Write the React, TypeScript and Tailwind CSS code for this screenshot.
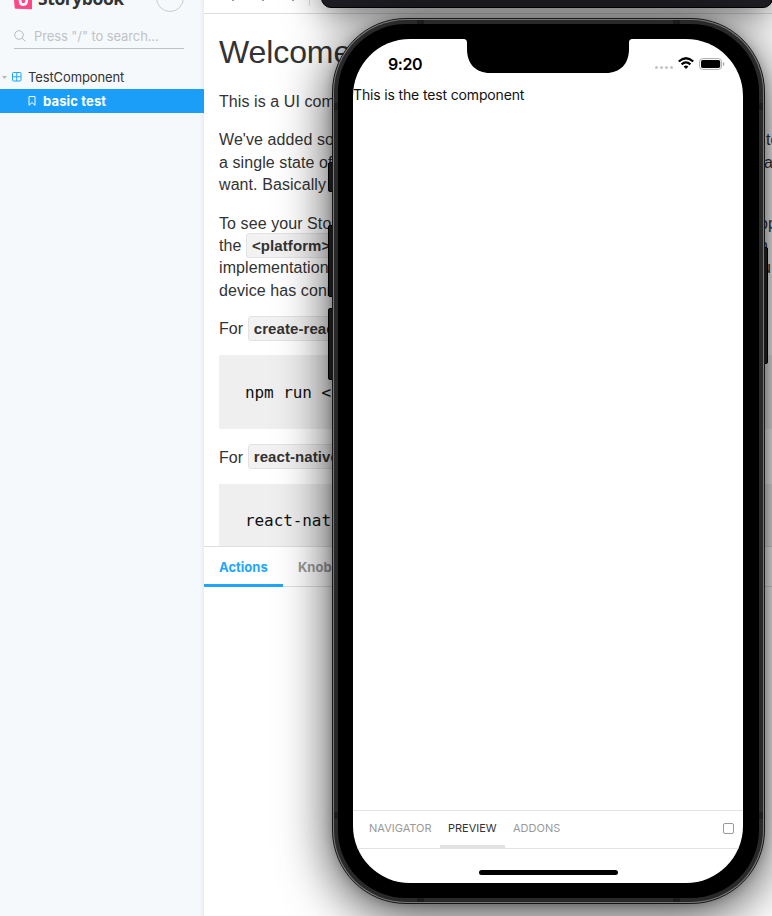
import { ReactNode } from "react";

function Line({ children, tail, shift = "" }: { children: ReactNode; tail?: string; shift?: string }) {
  return (
    <div className="flex h-[22.4px] justify-between whitespace-nowrap">
      <span>{children}</span>
      {tail && <span className={`w-2 shrink-0 ${shift}`}>{tail}</span>}
    </div>
  );
}

function Code({ children }: { children: ReactNode }) {
  return (
    <code className="-mt-[3px] inline-block h-[25px] rounded-[3px] border border-[#e3e3e3] bg-[#f2f2f2] px-[5px] align-middle font-['Liberation_Sans',sans-serif] text-[15px] leading-[23px] font-bold">
      {children}
    </code>
  );
}

function Sidebar() {
  return (
    <aside className="flex w-[204px] shrink-0 flex-col bg-[#f6f9fc] font-[Inter,sans-serif] shadow-[inset_-4px_0_4px_-3px_#dfe5ea]">
      <div className="flex h-[12px] items-end justify-between pr-5 pl-[14px]">
        <div className="flex h-[12px] items-end">
          <svg width="18" height="12" viewBox="0 0 18 12" className="shrink-0">
            <path d="M0 0h18v9.3L1.8 8.7Q.8 8.6.7 7.7Z" fill="#ff4785" />
            <path d="M6.1 0v.9q0 3.8 3.2 3.8T12.7.8V0" fill="none" stroke="white" strokeWidth="2.7" />
          </svg>
          <b className="mb-px ml-[6px] font-['Open_Sans',sans-serif] text-[17.5px] leading-[26px] font-bold tracking-[-0.42px] text-[#333]">
            Storybook
          </b>
        </div>
        <div className="size-7 shrink-0 rounded-full border border-[#c9ccce]" />
      </div>
      <div className="mx-5 ml-[14px] mt-[12px] flex h-[25px] items-center gap-[8px] border-b border-[#bfc2c4] text-[13px] text-[#bfc2c4]">
        <svg width="12" height="12" viewBox="0 0 12 12" fill="none" stroke="#b9bcbe" strokeWidth="1">
          <circle cx="5" cy="5" r="4.3" />
          <path d="m8.2 8.2 3.2 3.2" />
        </svg>
        <span className="pt-[2px] tracking-[-0.1px]">Press "/" to search...</span>
      </div>
      <div className="mt-[17px] flex h-[23px] items-center text-[13px] text-[#333]">
        <svg width="7" height="4" viewBox="0 0 7 4" className="ml-[1px] shrink-0">
          <path d="M1 0h5L3.5 3Z" fill="#b5b8ba" />
        </svg>
        <svg width="10" height="10" viewBox="0 0 10 10" fill="none" stroke="#1ea7fd" className="-mt-px ml-1 shrink-0">
          <rect x=".5" y=".5" width="8.5" height="8.5" rx="1" />
          <path d="M4.75 1v8M1 4.75h8" />
        </svg>
        <span className="ml-[6px] tracking-[-0.12px]">TestComponent</span>
      </div>
      <div className="flex h-6 items-center bg-[#1a9ef7] pl-7 text-[13px] font-bold text-white">
        <svg width="8" height="10" viewBox="0 0 8 10" fill="none" stroke="white">
          <path d="M1 .5h6v8.8L4 6.5 1 9.3Z" />
        </svg>
        <span className="ml-[7px] pt-px tracking-[0.14px]">basic test</span>
      </div>
    </aside>
  );
}

function Docs() {
  return (
    <div className="flex h-[546px] flex-col overflow-hidden">
      <div className="flex h-[14px] shrink-0 items-start border-b border-[#dedede] pl-7">
        <i className="h-px w-[2px] bg-[#999]" />
        <i className="ml-7 h-px w-[2px] bg-[#999]" />
        <i className="ml-7 h-px w-[2px] bg-[#999]" />
        <i className="ml-[15px] h-[6px] w-px bg-[#ddd]" />
      </div>
      <div className="flex flex-col pl-[15px] text-[16px] leading-[22.4px] tracking-[0.08px] text-[#333]">
        <h1 className="mt-[18px] h-[40px] text-[32px] leading-[40px] tracking-[-0.1px]">Welcome</h1>
        <div className="mt-[19px]"><Line>This is a UI com</Line></div>
        <div className="mt-4">
          <Line tail="to" shift="translate-x-[2px]">We've added so</Line>
          <Line tail="a">a single state of</Line>
          <Line>want. Basically</Line>
        </div>
        <div className="mt-4">
          <Line tail="op" shift="-translate-x-[5px]">To see your Sto</Line>
          <Line tail="n" shift="-translate-x-[5px]">the <Code>&lt;platform&gt;</Code></Line>
          <Line tail="u" shift="-translate-x-[2px]">implementation</Line>
          <Line>device has conn</Line>
        </div>
        <div className="mt-4"><Line>For <Code>create-react</Code></Line></div>
        <pre className="mt-[14px] h-[74px] bg-[#efefef] pt-[27px] pl-[26px] font-['DejaVu_Sans_Mono',monospace] text-[16px] tracking-[-0.08px] text-[#111]">npm run &lt;</pre>
        <div className="mt-[18px]"><Line>For <Code>react-native</Code></Line></div>
        <pre className="mt-[15px] h-[74px] bg-[#efefef] pt-[26px] pl-[26px] font-['DejaVu_Sans_Mono',monospace] text-[16px] tracking-[-0.08px] text-[#111]">react-nat</pre>
      </div>
    </div>
  );
}

function Phone() {
  return (
    <div className="absolute top-[18px] left-[332px] h-[886px] w-[433px]">
      <i className="absolute top-[144px] -left-[4px] h-[30px] w-2 rounded-[2px] border border-black bg-[#292929]" />
      <i className="absolute top-[207px] -left-[4px] h-[72px] w-2 rounded-[2px] border border-black bg-[#292929]" />
      <i className="absolute top-[290px] -left-[4px] h-[72px] w-2 rounded-[2px] border border-black bg-[#292929]" />
      <i className="absolute top-[229px] -right-[3px] h-[117px] w-2 rounded-[2px] border border-black bg-[#292929]" />
      <div className="relative flex h-full rounded-[74px] border border-[#171717] bg-[#777] p-px shadow-[0_0_10px_rgba(0,0,0,0.2),0_10px_52px_rgba(0,0,0,0.75)]">
        <div className="flex flex-1 rounded-[72px] bg-[#292929] p-1">
          <div className="flex flex-1 rounded-[68px] bg-black py-[15px] pr-4 pl-[15px]">
            <div className="flex flex-1 flex-col overflow-hidden rounded-[57px] bg-white">
              <div className="flex h-[48px] shrink-0 justify-between">
                <span className="mt-[15px] ml-[35px] w-[75px] font-[Inter,sans-serif] text-[16px] leading-5 font-semibold tracking-[-0.4px]">9:20</span>
                <svg width="170" height="34" viewBox="0 0 170 34" className="shrink-0">
                  <path d="M0 0h170c-3 0-4 1-4 4v6c0 15-9 24-23 24H27C13 34 4 25 4 10V4C4 1 3 0 0 0Z" />
                </svg>
                <div className="mt-[17px] mr-[18px] flex h-4 flex-1 items-center justify-end">
                  <div className="mt-[7px] mr-[5px] flex gap-[1.5px]">
                    <i className="size-[3.5px] rounded-full bg-[#c4c4c4]" />
                    <i className="size-[3.5px] rounded-full bg-[#c4c4c4]" />
                    <i className="size-[3.5px] rounded-full bg-[#c4c4c4]" />
                    <i className="size-[3.5px] rounded-full bg-[#c4c4c4]" />
                  </div>
                  <svg width="16" height="12" viewBox="0 0 16 12" fill="none" stroke="black" strokeWidth="2.3" className="-mt-[2px] mr-[5px]">
                    <path d="M.8 4.5Q8-2 15.2 4.5M3.6 7.3q4.4-3.9 8.8 0" />
                    <path d="m5.6 9.4q2.4-1.9 4.8 0L8 11.9Z" fill="black" stroke="none" />
                  </svg>
                  <svg width="26" height="12" viewBox="0 0 26 12" className="-mt-px">
                    <rect x=".6" y=".6" width="22" height="10.8" rx="3" fill="none" stroke="#aaa" />
                    <rect x="2" y="2" width="19.2" height="8" rx="1.7" />
                    <path d="M24 4q1.5.5 1.5 2T24 8Z" fill="#aaa" />
                  </svg>
                </div>
              </div>
              <p className="h-4 font-[Inter,sans-serif] text-[14px] leading-[15px] tracking-[-0.15px] text-[#111]">This is the test component</p>
              <div className="flex-1" />
              <div className="flex h-[39px] shrink-0 items-stretch border-y border-[#e3e3e3] pl-2 font-[Inter,sans-serif] text-[11px] leading-[35px] text-[#999]">
                <span className="w-[79px] pl-2">NAVIGATOR</span>
                <span className="w-[65px] border-b-[3px] border-[#e2e2e2] pl-2 text-[#333]">PREVIEW</span>
                <span className="pl-2">ADDONS</span>
                <i className="mt-[12px] mr-[9px] ml-auto size-[11px] rounded-[2px] border border-[#999]" />
              </div>
              <div className="flex h-[34px] shrink-0 justify-center pt-[21px]">
                <i className="h-[5px] w-[139px] rounded-full bg-black" />
              </div>
            </div>
          </div>
        </div>
      </div>
      <i className="absolute top-[2px] left-[85px] h-1 w-[7px] bg-[#1c1c1c]" />
      <i className="absolute top-[2px] right-[85px] h-1 w-[7px] bg-[#1c1c1c]" />
      <i className="absolute bottom-[2px] left-[85px] h-1 w-[7px] bg-[#1c1c1c]" />
      <i className="absolute right-[85px] bottom-[2px] h-1 w-[7px] bg-[#1c1c1c]" />
      <i className="absolute top-[85px] left-[2px] h-[7px] w-1 bg-[#1c1c1c]" />
      <i className="absolute top-[85px] right-[2px] h-[7px] w-1 bg-[#1c1c1c]" />
      <i className="absolute bottom-[85px] left-[2px] h-[7px] w-1 bg-[#1c1c1c]" />
      <i className="absolute right-[2px] bottom-[85px] h-[7px] w-1 bg-[#1c1c1c]" />
    </div>
  );
}

export default function App() {
  return (
    <div className="relative flex h-[916px] w-[772px] overflow-hidden bg-white font-['Liberation_Sans',Arial,sans-serif]">
      <Sidebar />
      <main className="flex min-w-0 flex-1 flex-col">
        <Docs />
        <div className="flex h-[41px] border-y border-[#dedede] font-[Inter,sans-serif] text-[13px] leading-[41px] font-bold">
          <span className="h-[40px] w-[79px] border-b-[3px] border-[#1ea7fd] pl-[15px] text-[#1ea7fd]">Actions</span>
          <span className="pl-[15px] text-[#999]">Knobs</span>
        </div>
      </main>
      <div className="absolute -top-[62px] left-[321px] h-[70px] w-[452px] rounded-[10px] border border-black bg-[#1d1c22] shadow-[0_6px_36px_rgba(0,0,0,0.55)]" />
      <Phone />
    </div>
  );
}
